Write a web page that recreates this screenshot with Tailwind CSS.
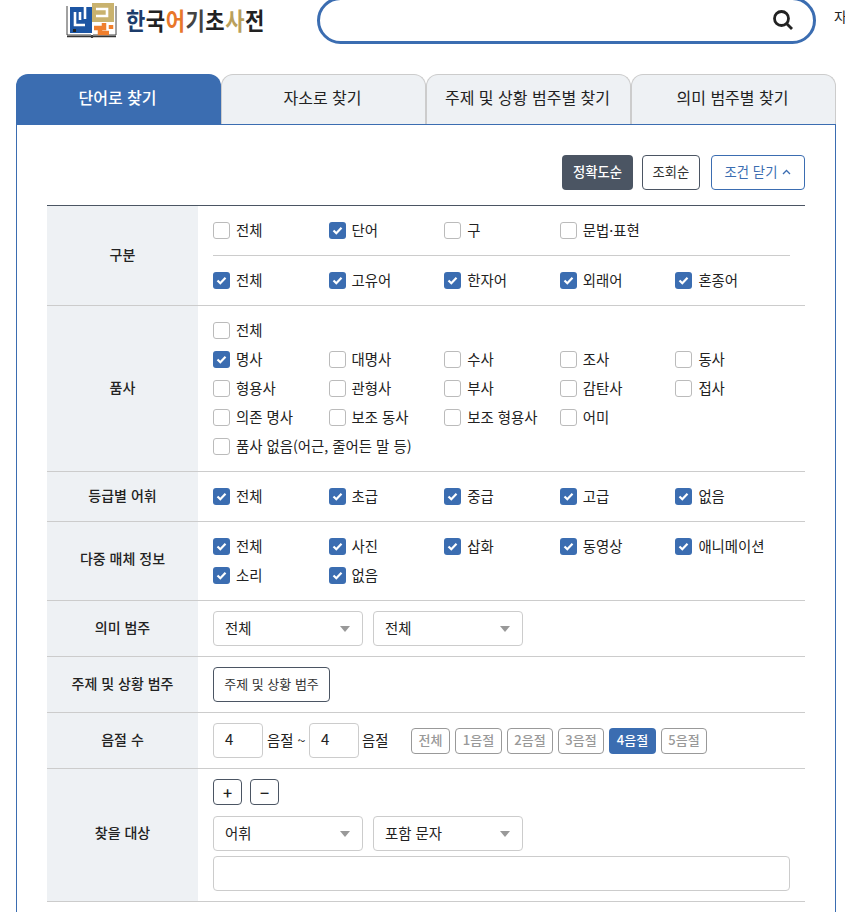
<!DOCTYPE html>
<html lang="ko">
<head>
  <meta charset="UTF-8" />
  <title>한국어기초사전</title>
  <script src="https://cdn.jsdelivr.net/npm/@tailwindcss/browser@4"></script>
</head>
<body class="bg-white h-[912px] overflow-hidden text-[14.4px] text-[#222] font-['Noto_Sans_CJK_KR','Noto_Sans',sans-serif]">
  <!-- header -->
  <header class="h-[74px] flex items-start overflow-hidden">
    <a class="ml-[66px] w-[251px] shrink-0 flex items-start gap-[9px] pt-[3px]">
      <svg width="51" height="35" viewBox="0 0 51 35" class="shrink-0">
        <path d="M1 3v29h24l1 1 1-1h23v-29" stroke="#444" stroke-width="1" fill="#fff"/>
        <rect x="4" y="4" width="22" height="26" fill="#1c55a3"/>
        <path d="M9 9v13h10M19 4v12M14 9v8" stroke="#fff" stroke-width="2.6" fill="none"/>
        <rect x="7" y="26" width="3" height="3" fill="#222"/>
        <rect x="26" y="0" width="22" height="19" fill="#c9b26e"/>
        <path d="M30 6h11v7h-11" stroke="#fff" stroke-width="2.6" fill="none"/>
        <path d="M28 25h10v-5M34 25v5h9M45 22v4" stroke="#f07f2d" stroke-width="4.5" fill="none"/>
        <path d="M1 33.5h24l1 1 1-1h23" stroke="#333" stroke-width="1.6" fill="none"/>
      </svg>
      <span class="inline-block scale-y-[1.15] text-[21px] tracking-[0.5px] leading-[34px] font-bold text-[#222] whitespace-nowrap"><span class="text-[#1d3c6b]">한</span>국<span class="text-[#e8772a]">어</span><span class="text-[#444]">기</span>초<span class="text-[#b9a05c]">사</span>전</span>
    </a>
    <div class="-mt-[3px] w-[499px] h-[47px] border-[3px] border-[#3b6db1] rounded-[24px] flex items-center justify-end pr-[19px] pb-[2px] shrink-0">
      <svg width="22" height="22" viewBox="0 0 22 22" fill="none" stroke="#222" stroke-width="2.8"><circle cx="9.5" cy="9.5" r="7"/><path d="M14.5 14.5l5.5 5.5"/></svg>
    </div>
    <span class="ml-[18px] mt-[6px] text-[14px] whitespace-nowrap">자세히 찾기</span>
  </header>

  <main class="ml-[16px] w-[820px]">
    <!-- tabs -->
    <div class="flex h-[51px] text-[16px]">
      <div class="w-[205px] h-[51px] rounded-t-[12px] bg-[#3b6db1] text-white font-medium flex items-center justify-center pb-[6px] pr-[2px]">단어로 찾기</div>
      <div class="w-[205px] h-[50px] rounded-t-[12px] bg-[#eef1f4] border border-b-0 border-[#ccc] flex items-center justify-center pb-[6px] pr-[2px]">자소로 찾기</div>
      <div class="w-[205px] h-[50px] rounded-t-[12px] bg-[#eef1f4] border border-b-0 border-[#ccc] flex items-center justify-center pb-[6px] pr-[2px]">주제 및 상황 범주별 찾기</div>
      <div class="w-[205px] h-[50px] rounded-t-[12px] bg-[#eef1f4] border border-b-0 border-[#ccc] flex items-center justify-center pb-[6px] pr-[2px]">의미 범주별 찾기</div>
    </div>

    <section class="-mt-px h-[800px] border border-[#3b6db1] px-[30px] pt-[30px]">
      <div class="flex justify-end items-start h-[50px] text-[13.33px]">
        <button class="w-[71px] h-[35px] rounded-[4px] bg-[#4b5563] text-white font-medium pb-[2px]">정확도순</button>
        <button class="ml-[9px] w-[58px] h-[35px] rounded-[4px] border border-[#4b5563] text-[#333] pb-[2px]">조회순</button>
        <button class="ml-[11px] w-[94px] h-[35px] rounded-[4px] border border-[#3b6db1] text-[#3b6db1] flex items-center justify-center gap-[5px] pb-[2px]">조건 닫기
          <svg width="9" height="6" viewBox="0 0 9 6" fill="none" stroke="#3b6db1" stroke-width="1.3"><path d="M1 5l3.5-3.5L8 5"/></svg>
        </button>
      </div>

      <div class="border-t border-[#4b5563]">
        <!-- 구분 -->
        <div class="flex h-[100px] border-b border-[#ccc]">
          <div class="w-[151px] shrink-0 bg-[#eef1f4] text-[14px] font-medium flex items-center justify-center pb-[3px]">구분</div>
          <div class="w-[607px] px-[15px]">
            <div class="h-[50px] border-b border-[#ccc] grid grid-cols-[repeat(5,115.6px)] items-center" data-checks="전체:0,단어:1,구:0,문법·표현:0"></div>
            <div class="h-[49px] grid grid-cols-[repeat(5,115.6px)] items-center" data-checks="전체:1,고유어:1,한자어:1,외래어:1,혼종어:1"></div>
          </div>
        </div>
        <!-- 품사 -->
        <div class="flex h-[166px] border-b border-[#ccc]">
          <div class="w-[151px] shrink-0 bg-[#eef1f4] text-[14px] font-medium flex items-center justify-center pb-[3px]">품사</div>
          <div class="flex-1 px-[15px] py-[10px] grid grid-cols-[repeat(5,115.6px)] auto-rows-[29px] items-center" data-checks="!전체:0,명사:1,대명사:0,수사:0,조사:0,동사:0,형용사:0,관형사:0,부사:0,감탄사:0,접사:0,의존 명사:0,보조 동사:0,보조 형용사:0,어미:0,!품사 없음(어근, 줄어든 말 등):0"></div>
        </div>
        <!-- 등급별 어휘 -->
        <div class="flex h-[50px] border-b border-[#ccc]">
          <div class="w-[151px] shrink-0 bg-[#eef1f4] text-[14px] font-medium flex items-center justify-center pb-[3px]">등급별 어휘</div>
          <div class="flex-1 px-[15px] grid grid-cols-[repeat(5,115.6px)] items-center" data-checks="전체:1,초급:1,중급:1,고급:1,없음:1"></div>
        </div>
        <!-- 다중 매체 정보 -->
        <div class="flex h-[79px] border-b border-[#ccc]">
          <div class="w-[151px] shrink-0 bg-[#eef1f4] text-[14px] font-medium flex items-center justify-center pb-[5px]">다중 매체 정보</div>
          <div class="flex-1 px-[15px] py-[10px] grid grid-cols-[repeat(5,115.6px)] auto-rows-[29px] items-center" data-checks="전체:1,사진:1,삽화:1,동영상:1,애니메이션:1,소리:1,없음:1"></div>
        </div>
        <!-- 의미 범주 -->
        <div class="flex h-[56px] border-b border-[#ccc]">
          <div class="w-[151px] shrink-0 bg-[#eef1f4] text-[14px] font-medium flex items-center justify-center pb-[3px]">의미 범주</div>
          <div class="flex-1 px-[15px] flex items-center gap-[10px]">
            <div class="relative w-[150px] h-[35px] border border-[#ccc] rounded-[4px] pl-[11px] pb-[2px] flex items-center">전체<span class="absolute right-[12px] top-[14px] border-x-[5px] border-x-transparent border-t-[6px] border-t-[#999]"></span></div>
            <div class="relative w-[150px] h-[35px] border border-[#ccc] rounded-[4px] pl-[11px] pb-[2px] flex items-center">전체<span class="absolute right-[12px] top-[14px] border-x-[5px] border-x-transparent border-t-[6px] border-t-[#999]"></span></div>
          </div>
        </div>
        <!-- 주제 및 상황 범주 -->
        <div class="flex h-[56px] border-b border-[#ccc]">
          <div class="w-[151px] shrink-0 bg-[#eef1f4] text-[14px] font-medium flex items-center justify-center pb-[3px]">주제 및 상황 범주</div>
          <div class="flex-1 px-[15px] flex items-center">
            <button class="w-[117px] h-[35px] border border-[#4b5563] rounded-[4px] text-[13px] text-[#333] pb-[2px]">주제 및 상황 범주</button>
          </div>
        </div>
        <!-- 음절 수 -->
        <div class="flex h-[56px] border-b border-[#ccc]">
          <div class="w-[151px] shrink-0 bg-[#eef1f4] text-[14px] font-medium flex items-center justify-center pb-[2px]">음절 수</div>
          <div class="flex-1 px-[15px] flex items-center">
            <div class="w-[50px] h-[35px] border border-[#ccc] rounded-[4px] pl-[11px] pb-[2px] flex items-center text-[15px]">4</div>
            <span class="ml-[4px] w-[42px] pb-[2px] whitespace-nowrap">음절 ~</span>
            <div class="w-[50px] h-[35px] border border-[#ccc] rounded-[4px] pl-[11px] pb-[2px] flex items-center text-[15px]">4</div>
            <span class="ml-[3px] w-[49px] pb-[2px]">음절</span>
            <div class="flex gap-[5px] text-[13px] font-medium text-[#999]">
              <span class="w-[39px] h-[26px] border border-[#999] rounded-[4px] flex items-center justify-center pb-[2px]">전체</span>
              <span class="w-[47px] h-[26px] border border-[#999] rounded-[4px] flex items-center justify-center pb-[2px]">1음절</span>
              <span class="w-[46px] h-[26px] border border-[#999] rounded-[4px] flex items-center justify-center pb-[2px]">2음절</span>
              <span class="w-[46px] h-[26px] border border-[#999] rounded-[4px] flex items-center justify-center pb-[2px]">3음절</span>
              <span class="w-[47px] h-[26px] bg-[#3b6db1] text-white rounded-[4px] flex items-center justify-center pb-[2px]">4음절</span>
              <span class="w-[46px] h-[26px] border border-[#999] rounded-[4px] flex items-center justify-center pb-[2px]">5음절</span>
            </div>
          </div>
        </div>
        <!-- 찾을 대상 -->
        <div class="flex h-[133px] border-b border-[#ccc]">
          <div class="w-[151px] shrink-0 bg-[#eef1f4] text-[14px] font-medium flex items-center justify-center pb-[5px]">찾을 대상</div>
          <div class="flex-1 px-[15px] pt-[10px]">
            <div class="flex gap-[8px]">
              <button class="w-[29px] h-[26px] border border-[#4b5563] rounded-[4px] leading-none text-[16px] font-medium">+</button>
              <button class="w-[29px] h-[26px] border border-[#4b5563] rounded-[4px] leading-none text-[16px] font-medium">−</button>
            </div>
            <div class="flex gap-[10px] mt-[11px]">
              <div class="relative w-[150px] h-[35px] border border-[#ccc] rounded-[4px] pl-[11px] pb-[2px] flex items-center">어휘<span class="absolute right-[12px] top-[14px] border-x-[5px] border-x-transparent border-t-[6px] border-t-[#999]"></span></div>
              <div class="relative w-[150px] h-[35px] border border-[#ccc] rounded-[4px] pl-[11px] pb-[2px] flex items-center">포함 문자<span class="absolute right-[12px] top-[14px] border-x-[5px] border-x-transparent border-t-[6px] border-t-[#999]"></span></div>
            </div>
            <div class="mt-[5px] h-[35px] border border-[#ccc] rounded-[4px]"></div>
          </div>
        </div>
      </div>
    </section>
  </main>

<script>
  const tick = '<svg width="11" height="9" viewBox="0 0 11 9" fill="none" stroke="#fff" stroke-width="2.2"><path d="M1.5 4.5l2.8 2.7 5.2-5.5"/></svg>';

  function checkbox(label, on) {
    const box = on
      ? '<span class="w-[17px] h-[17px] rounded-[3px] bg-[#3b6db1] flex items-center justify-center shrink-0">' + tick + '</span>'
      : '<span class="w-[17px] h-[17px] rounded-[3px] border border-[#bbb] bg-white shrink-0"></span>';
    return '<label class="flex items-center gap-[6px] whitespace-nowrap">' + box + '<span class="pb-[2px]">' + label + '</span></label>';
  }

  // "!" in front of an item means it takes the whole row
  document.querySelectorAll("[data-checks]").forEach(row => {
    let html = "";
    row.dataset.checks.split(/,(?=[^ ])/).forEach(item => {
      const fullRow = item.startsWith("!");
      const [label, on] = item.replace("!", "").split(":");
      const box = checkbox(label, on === "1");
      html += fullRow ? '<div class="col-span-5">' + box + '</div>' : box;
    });
    row.innerHTML = html;
  });
</script>
</body>
</html>
